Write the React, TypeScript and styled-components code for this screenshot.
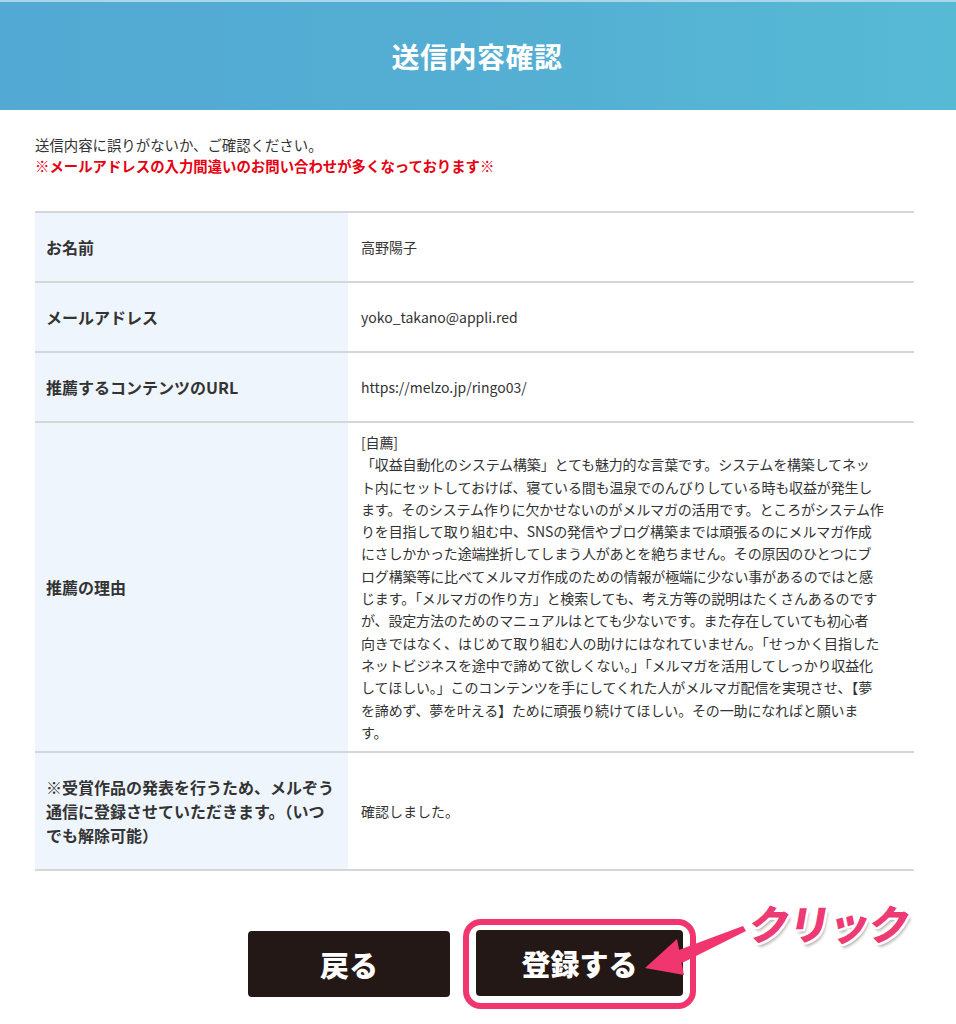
import React from "react";
import styled, { createGlobalStyle } from "styled-components";

const GlobalStyle = createGlobalStyle`
  html, body { margin: 0; padding: 0; background: #ffffff; }
  body {
    font-family: "Noto Sans CJK JP", "Noto Sans", "Liberation Sans", sans-serif;
    color: #333333;
    -webkit-font-smoothing: antialiased;
  }
`;

const Page = styled.div`
  width: 956px;
  min-height: 1024px;
  background: #fff;
`;

const Header = styled.header`
  height: 108px;
  border-top: 2px solid #a9d6e9;
  background: linear-gradient(90deg, #52a9d3 0%, #54afd3 55%, #57bad5 100%);
  display: flex;
  align-items: center;
  justify-content: center;
`;

const Title = styled.h1`
  margin: 0;
  padding-right: 2px;
  color: #ffffff;
  font-size: 28px;
  font-weight: 700;
  letter-spacing: 0.5px;
`;

const Content = styled.main`
  padding: 24px 42px 0 35px;
`;

const Intro = styled.div`
  font-size: 14.4px;
  line-height: 21px;
  color: #333;
`;

const Warning = styled.div`
  color: #e60012;
  font-weight: 700;
`;

const Table = styled.div`
  margin-top: 35px;
  border-top: 2px solid #d6d6d6;
`;

const Row = styled.div`
  display: grid;
  grid-template-columns: 313px 1fr;
  border-bottom: 2px solid #d6d6d6;
`;

const Label = styled.div`
  background: #eef5fc;
  padding: 22px 10px 22px 11px;
  font-size: 16px;
  line-height: 24px;
  font-weight: 700;
  color: #333;
  display: flex;
  align-items: center;
`;

const Value = styled.div`
  padding: 8px 13px;
  font-size: 14px;
  line-height: 22.3px;
  color: #333;
  display: flex;
  align-items: center;
`;

const Buttons = styled.div`
  display: flex;
  justify-content: center;
  align-items: center;
  gap: 26px;
  padding: 60px 25px 0 0;
`;

const Button = styled.button<{ $wide?: boolean }>`
  width: ${(p) => (p.$wide ? "207px" : "202px")};
  height: 66px;
  border: none;
  border-radius: 4px;
  background: #231815;
  color: #ffffff;
  font-family: "Noto Sans CJK JP", "Noto Sans", sans-serif;
  font-size: 29px;
  font-weight: 800;
  cursor: pointer;
  margin-top: ${(p) => (p.$wide ? "-2px" : "0")};
`;

const Highlight = styled.div`
  position: relative;
`;

const Ring = styled.div`
  position: absolute;
  left: -13px;
  top: -13px;
  right: -13px;
  bottom: -13px;
  border: 6px solid #f0356f;
  border-radius: 18px;
  pointer-events: none;
`;

const Arrow = styled.svg`
  position: absolute;
  left: 164px;
  top: -14px;
  width: 120px;
  height: 60px;
  overflow: visible;
`;

const Click = styled.div`
  position: absolute;
  left: 274px;
  top: -40px;
  white-space: nowrap;
  font-size: 41px;
  font-weight: 900;
  color: #ee3a74;
  letter-spacing: -1px;
  transform: skewX(-10deg);
  text-shadow:
    2px 0 0 #fff, -2px 0 0 #fff, 0 2px 0 #fff, 0 -2px 0 #fff,
    2px 2px 0 #fff, -2px -2px 0 #fff, 2px -2px 0 #fff, -2px 2px 0 #fff,
    3px 4px 3px rgba(0, 0, 0, 0.3);
`;

const reasonLines = [
  "[自薦]",
  "「収益自動化のシステム構築」とても魅力的な言葉です。システムを構築してネッ",
  "ト内にセットしておけば、寝ている間も温泉でのんびりしている時も収益が発生し",
  "ます。そのシステム作りに欠かせないのがメルマガの活用です。ところがシステム作",
  "りを目指して取り組む中、SNSの発信やブログ構築までは頑張るのにメルマガ作成",
  "にさしかかった途端挫折してしまう人があとを絶ちません。その原因のひとつにブ",
  "ログ構築等に比べてメルマガ作成のための情報が極端に少ない事があるのではと感",
  "じます。「メルマガの作り方」と検索しても、考え方等の説明はたくさんあるのです",
  "が、設定方法のためのマニュアルはとても少ないです。また存在していても初心者",
  "向きではなく、はじめて取り組む人の助けにはなれていません。「せっかく目指した",
  "ネットビジネスを途中で諦めて欲しくない。」「メルマガを活用してしっかり収益化",
  "してほしい。」このコンテンツを手にしてくれた人がメルマガ配信を実現させ、【夢",
  "を諦めず、夢を叶える】ために頑張り続けてほしい。その一助になればと願いま",
  "す。",
];

const ReasonText = styled.div`
  white-space: nowrap;
  letter-spacing: -0.15px;
`;

export default function App() {
  return (
    <Page>
      <GlobalStyle />
      <Header>
        <Title>送信内容確認</Title>
      </Header>
      <Content>
        <Intro>
          <div>送信内容に誤りがないか、ご確認ください。</div>
          <Warning>※メールアドレスの入力間違いのお問い合わせが多くなっております※</Warning>
        </Intro>
        <Table>
          <Row>
            <Label>お名前</Label>
            <Value>高野陽子</Value>
          </Row>
          <Row>
            <Label>メールアドレス</Label>
            <Value>yoko_takano@appli.red</Value>
          </Row>
          <Row>
            <Label>推薦するコンテンツのURL</Label>
            <Value>https://melzo.jp/ringo03/</Value>
          </Row>
          <Row>
            <Label>推薦の理由</Label>
            <Value>
              <ReasonText>
                {reasonLines.map((l, i) => (
                  <div key={i}>{l}</div>
                ))}
              </ReasonText>
            </Value>
          </Row>
          <Row>
            <Label>※受賞作品の発表を行うため、メルぞう通信に登録させていただきます。（いつでも解除可能）</Label>
            <Value>確認しました。</Value>
          </Row>
        </Table>
      </Content>
      <Buttons>
        <Button>戻る</Button>
        <Highlight>
          <Button $wide>登録する</Button>
          <Ring />
          <Arrow viewBox="0 0 120 60">
            <polygon points="103,8 106,13 42,45 36,33" fill="#f0356f" />
            <polygon points="5,50 37,21 44,57" fill="#f0356f" />
          </Arrow>
          <Click>クリック</Click>
        </Highlight>
      </Buttons>
    </Page>
  );
}
